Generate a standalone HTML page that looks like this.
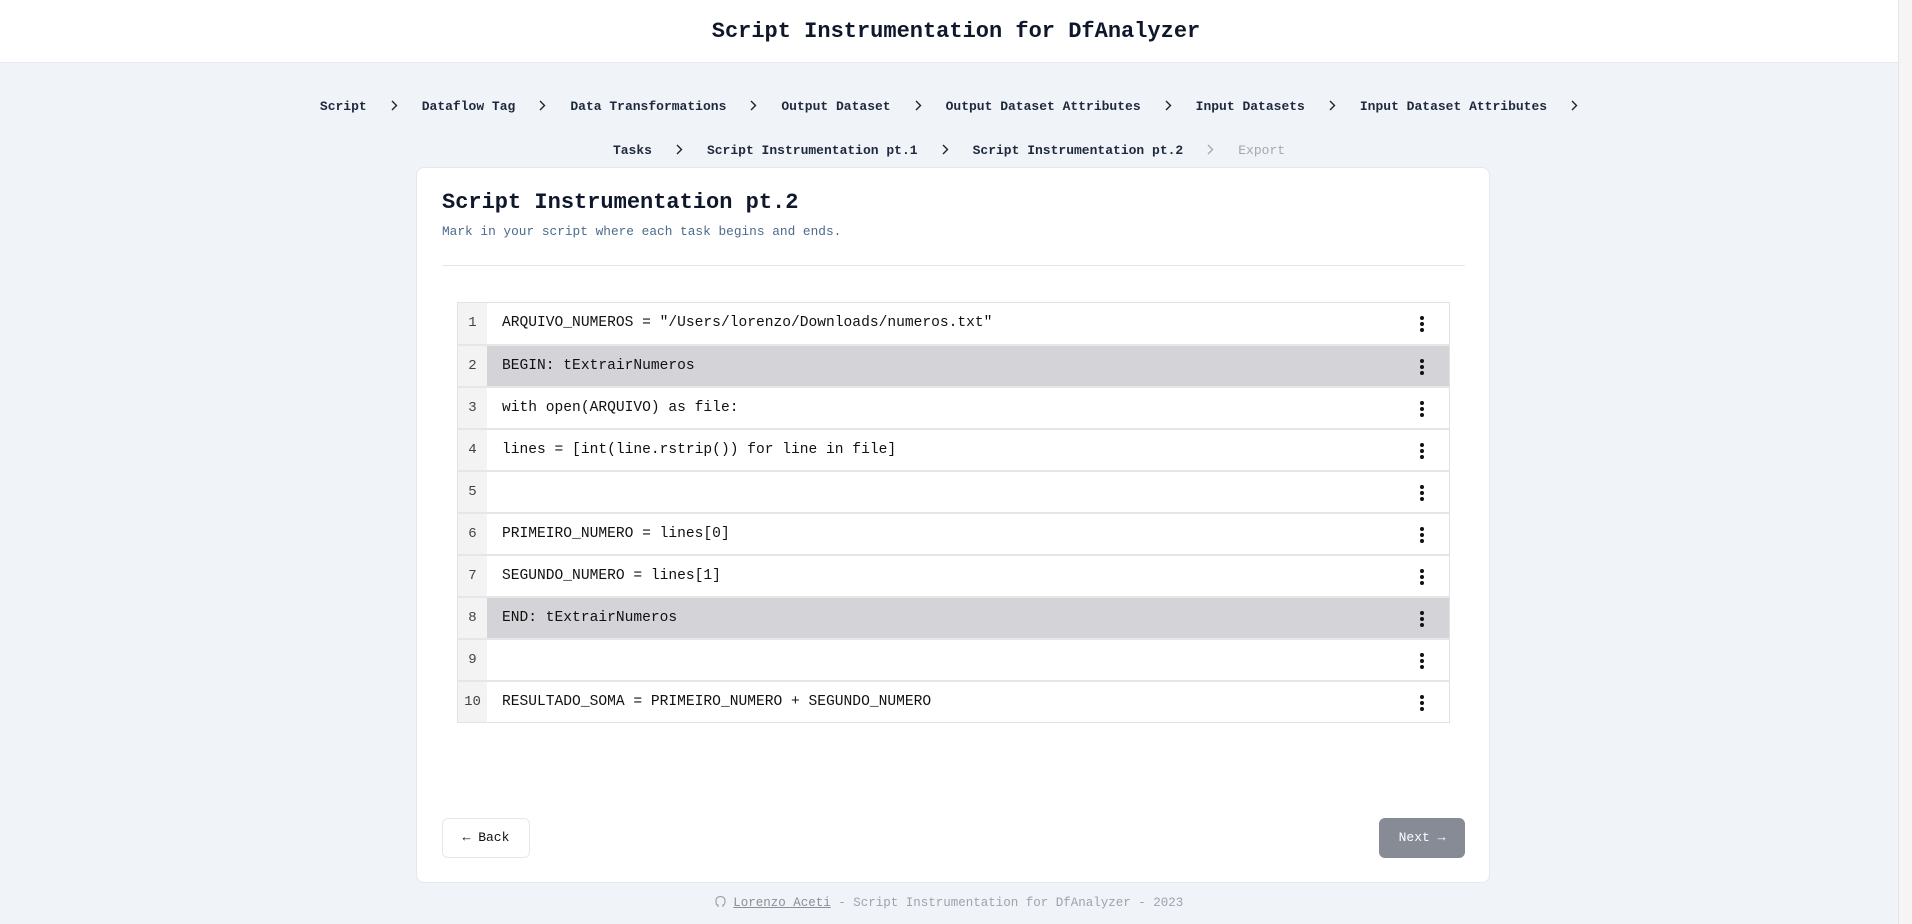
<!DOCTYPE html>
<html><head><meta charset="utf-8"><style>
*{box-sizing:border-box;margin:0;padding:0}
body{width:1912px;height:924px;overflow:hidden;background:#f0f3f8;font-family:"Liberation Mono",monospace;color:#111827;position:relative}
.hdr{height:63px;background:#fff;border-bottom:1px solid #e2e8f0;text-align:center;font-weight:bold;font-size:22px;line-height:64px;color:#0f172a}
.sb{position:absolute;right:0;top:0;width:14px;height:924px;background:#f5f5f5;border-left:1px solid #e5e5e5}
.bc{position:absolute;left:0;width:1898px;text-align:center;font-size:13px;font-weight:bold;color:#1e293b;white-space:nowrap}
.bc svg{display:inline-block;margin:0 24px;vertical-align:-1px}
.card{position:absolute;left:416px;top:167px;width:1074px;height:716px;background:#fff;border:1px solid #e5e7eb;border-radius:8px}
h1{position:absolute;left:25px;top:22px;font-size:22px;font-weight:bold;color:#0f172a}
.sub{position:absolute;left:25px;top:56px;font-size:12.8px;color:#4b6b8c}
.hr{position:absolute;left:25px;top:97px;width:1023px;height:1px;background:#e2e8f0}
.tbl{position:absolute;left:40px;top:134px;width:993px;border:1px solid #e2e2e2;background:#e4e4e4}
.row{height:42px;display:flex;background:#fff;border-top:2px solid #e6e6e6;position:relative}
.row:first-child{border-top:none;height:41px}
.row.hl{background:#d4d4d8}
.num{width:29px;background:#f3f3f3;color:#444;font-size:14px;line-height:40px;text-align:center}
.code{padding-left:15px;font-size:14.6px;line-height:40px;color:#111}
.dots{position:absolute;left:962px;top:13px;width:4px}
.dots i{display:block;width:4px;height:4px;border-radius:2px;background:#111;margin-bottom:2px}
.btn{position:absolute;top:650px;height:40px;border-radius:6px;font-size:13px;line-height:38px;text-align:center}
.back{left:25px;width:88px;border:1px solid #e5e7eb;color:#111;background:#fff}
.next{left:962px;width:86px;background:#878b96;color:#fff;border:1px solid #878b96}
.foot{position:absolute;left:0;width:1898px;top:895px;text-align:center;font-size:12.5px;color:#9ca3af}
.foot u{color:#8a9099}
</style></head><body>
<div class="hdr">Script Instrumentation for DfAnalyzer</div>
<div class="sb"></div>
<div class="bc" style="top:99px">Script<svg width="7" height="11" viewBox="0 0 7 11"><path d="M1 1l4.5 4.5L1 10" fill="none" stroke="#222" stroke-width="1.4"/></svg>Dataflow Tag<svg width="7" height="11" viewBox="0 0 7 11"><path d="M1 1l4.5 4.5L1 10" fill="none" stroke="#222" stroke-width="1.4"/></svg>Data Transformations<svg width="7" height="11" viewBox="0 0 7 11"><path d="M1 1l4.5 4.5L1 10" fill="none" stroke="#222" stroke-width="1.4"/></svg>Output Dataset<svg width="7" height="11" viewBox="0 0 7 11"><path d="M1 1l4.5 4.5L1 10" fill="none" stroke="#222" stroke-width="1.4"/></svg>Output Dataset Attributes<svg width="7" height="11" viewBox="0 0 7 11"><path d="M1 1l4.5 4.5L1 10" fill="none" stroke="#222" stroke-width="1.4"/></svg>Input Datasets<svg width="7" height="11" viewBox="0 0 7 11"><path d="M1 1l4.5 4.5L1 10" fill="none" stroke="#222" stroke-width="1.4"/></svg>Input Dataset Attributes<svg width="7" height="11" viewBox="0 0 7 11" style="margin-right:0"><path d="M1 1l4.5 4.5L1 10" fill="none" stroke="#222" stroke-width="1.4"/></svg></div>
<div class="bc" style="top:143px">Tasks<svg width="7" height="11" viewBox="0 0 7 11"><path d="M1 1l4.5 4.5L1 10" fill="none" stroke="#222" stroke-width="1.4"/></svg>Script Instrumentation pt.1<svg width="7" height="11" viewBox="0 0 7 11"><path d="M1 1l4.5 4.5L1 10" fill="none" stroke="#222" stroke-width="1.4"/></svg>Script Instrumentation pt.2<svg width="7" height="11" viewBox="0 0 7 11"><path d="M1 1l4.5 4.5L1 10" fill="none" stroke="#aaa" stroke-width="1.4"/></svg><span style="color:#a3a8ae;font-weight:normal">Export</span></div>
<div class="card">
<h1>Script Instrumentation pt.2</h1>
<div class="sub">Mark in your script where each task begins and ends.</div>
<div class="hr"></div>
<div class="tbl">
<div class="row"><div class="num">1</div><div class="code">ARQUIVO_NUMEROS = "/Users/lorenzo/Downloads/numeros.txt"</div><div class="dots"><i></i><i></i><i></i></div></div>
<div class="row hl"><div class="num">2</div><div class="code">BEGIN: tExtrairNumeros</div><div class="dots"><i></i><i></i><i></i></div></div>
<div class="row"><div class="num">3</div><div class="code">with open(ARQUIVO) as file:</div><div class="dots"><i></i><i></i><i></i></div></div>
<div class="row"><div class="num">4</div><div class="code">lines = [int(line.rstrip()) for line in file]</div><div class="dots"><i></i><i></i><i></i></div></div>
<div class="row"><div class="num">5</div><div class="code"></div><div class="dots"><i></i><i></i><i></i></div></div>
<div class="row"><div class="num">6</div><div class="code">PRIMEIRO_NUMERO = lines[0]</div><div class="dots"><i></i><i></i><i></i></div></div>
<div class="row"><div class="num">7</div><div class="code">SEGUNDO_NUMERO = lines[1]</div><div class="dots"><i></i><i></i><i></i></div></div>
<div class="row hl"><div class="num">8</div><div class="code">END: tExtrairNumeros</div><div class="dots"><i></i><i></i><i></i></div></div>
<div class="row"><div class="num">9</div><div class="code"></div><div class="dots"><i></i><i></i><i></i></div></div>
<div class="row"><div class="num">10</div><div class="code">RESULTADO_SOMA = PRIMEIRO_NUMERO + SEGUNDO_NUMERO</div><div class="dots"><i></i><i></i><i></i></div></div>
</div>
<div class="btn back">&#8592; Back</div>
<div class="btn next">Next &#8594;</div>
</div>
<div class="foot"><svg width="11" height="13" viewBox="0 0 11 13" style="vertical-align:-2px"><path d="M3 12V10C1 10 1 8 1 6C1 3 3 1.5 5.5 1.5S10 3 10 6C10 8 9.5 10 8 10V12" fill="none" stroke="#9ca3af" stroke-width="1.2"/></svg> <u>Lorenzo Aceti</u> - Script Instrumentation for DfAnalyzer - 2023</div>
</body></html>
